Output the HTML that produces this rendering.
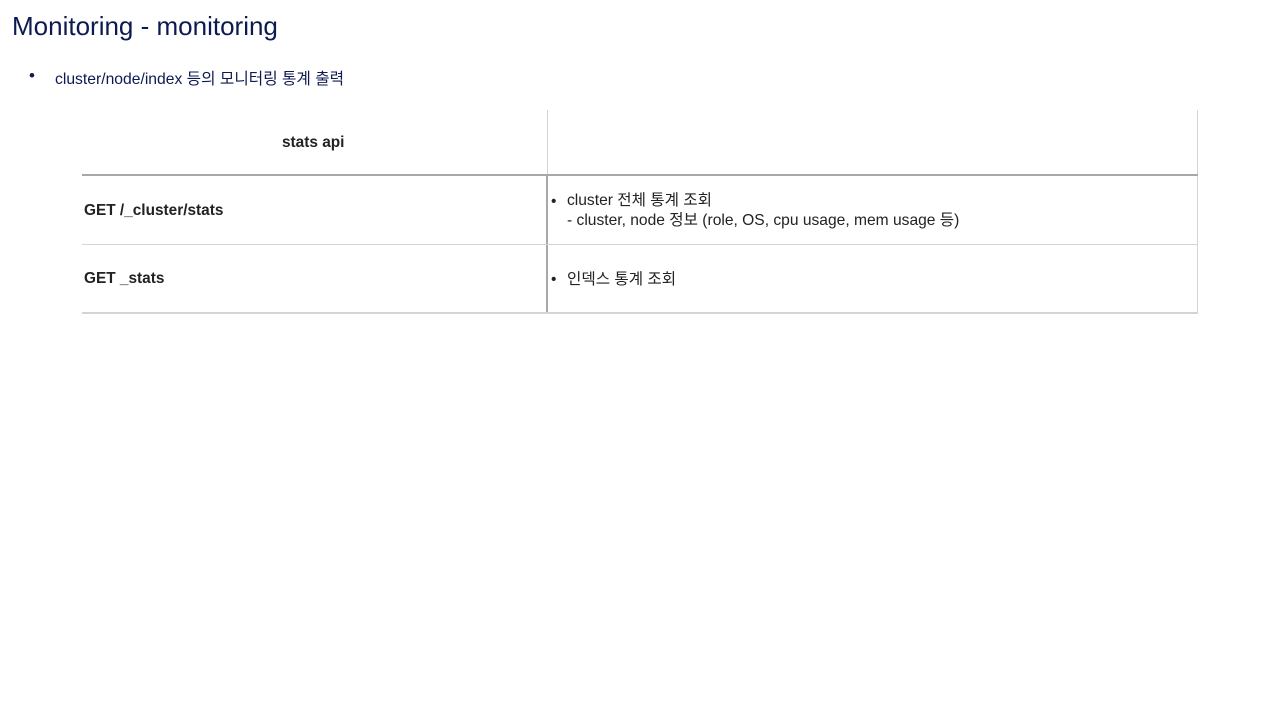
<!DOCTYPE html>
<html><head><meta charset="utf-8"><style>
body{margin:0;width:1280px;height:720px;background:#fff;position:relative;font-family:"Liberation Sans","Noto Sans CJK KR",sans-serif;overflow:hidden}
.a{position:absolute;white-space:nowrap}
.t{color:#0d1a52}
.c{color:#222;font-size:15.4px}
.l{position:absolute;background:#d4d4d4}
</style></head><body>
<div class="a t" style="left:12px;top:11px;font-size:26px">Monitoring - monitoring</div>
<div class="a t" style="left:29px;top:66px;font-size:17px">•</div>
<div class="a t" style="left:55px;top:66px;font-size:15.7px">cluster/node/index 등의 모니터링 통계 출력</div>

<div class="l" style="left:547px;top:110px;width:1px;height:65px"></div>
<div class="l" style="left:546px;top:175px;width:2px;height:138px;background:#a8a8a8"></div>
<div class="l" style="left:1197px;top:110px;width:1px;height:203px"></div>
<div class="l" style="left:82px;top:174px;width:1116px;height:2px;background:#a8a8a8"></div>
<div class="l" style="left:82px;top:244px;width:1116px;height:1px"></div>
<div class="l" style="left:82px;top:312px;width:1116px;height:2px"></div>

<div class="a c" style="left:282px;top:134px;font-weight:bold">stats api</div>
<div class="a c" style="left:84px;top:202px;font-weight:bold">GET /_cluster/stats</div>
<div class="a c" style="left:84px;top:270px;font-weight:bold">GET _stats</div>
<div class="a c" style="left:551px;top:193px">•</div>
<div class="a c" style="left:567px;top:191px;line-height:20px;font-size:15.6px">cluster 전체 통계 조회<br>- cluster, node 정보 (role, OS, cpu usage, mem usage 등)</div>
<div class="a c" style="left:551px;top:271px">•</div>
<div class="a c" style="left:567px;top:267px;font-size:15.6px">인덱스 통계 조회</div>
</body></html>
